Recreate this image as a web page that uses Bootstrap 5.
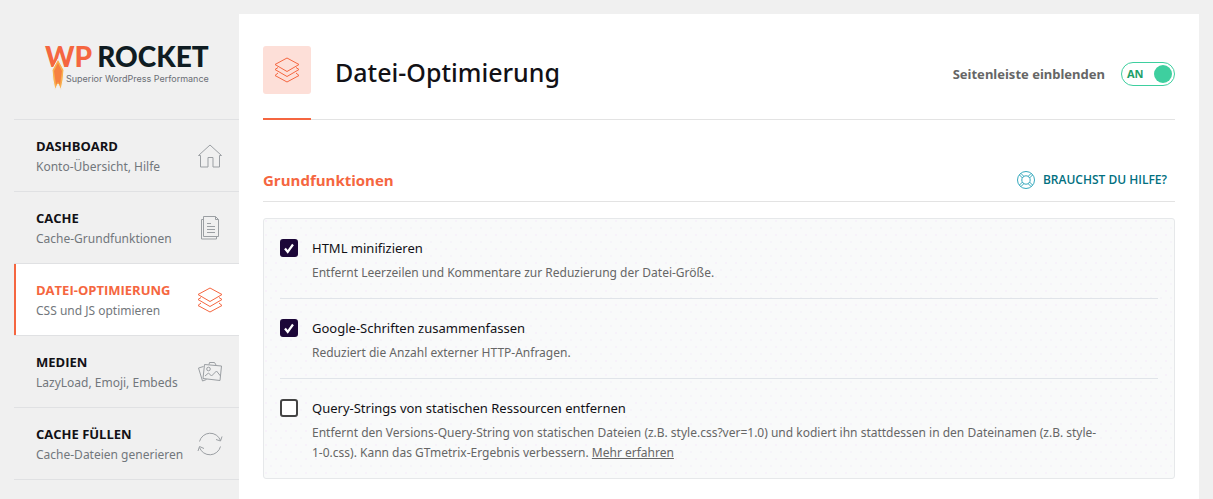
<!DOCTYPE html>
<html lang="de">
<head>
<meta charset="utf-8">
<meta name="viewport" content="width=device-width, initial-scale=1">
<title>WP Rocket – Datei-Optimierung</title>
<link rel="stylesheet" href="https://cdn.jsdelivr.net/npm/bootstrap@5.3.0/dist/css/bootstrap.min.css">
<style>
:root { --orange: #f56640; --ink: #121116; --line: #e0e4e9; }
body { background: #f0f0f0; color: var(--ink); font: 13px/20px "Noto Sans", "Open Sans", sans-serif; }
.shell { padding: 14px 14px 0; }
.side { width: 225px; }
.brand { height: 105px; padding: 26px 0 0 31px; text-decoration: none; color: #0f1c22; font-family: "Lato Black", Lato, sans-serif; }
.brand:hover { color: #0f1c22; }
.brand-name { font-size: 28px; line-height: 32px; font-weight: 900; gap: 5px; }
.brand-name span:first-child { color: var(--orange); }
.brand-tag { margin-top: 1px; font: 9px/12px Inter, sans-serif; color: #6b6e75; padding-left: 21px; white-space: nowrap; }
.flame { left: 37px; top: 45px; }
.side-link { height: 72px; padding: 16px 16px 0 22px; border-top: 1px solid #e0e1e3; color: #72777c; text-decoration: none; }
.side-list li:last-child .side-link { height: 73px; border-bottom: 1px solid #e0e1e3; }
.side-link strong { display: block; color: var(--ink); font-family: "Open Sans", sans-serif; font-weight: 700; }
.side-link span span { font-size: 12px; }
.side-link svg { margin-top: 7px; color: #9b9fa3; }
.side-link.active { background: #fff; box-shadow: inset 2px 0 var(--orange); }
.side-link.active strong, .side-link.active svg { color: var(--orange); }
.page { padding: 32px 24px 20px; }
.page-head { height: 74px; border-bottom: 1px solid #e3e3e3; }
.head-icon { width: 48px; height: 48px; border-radius: 3px; background: #fddfd8; color: var(--orange); }
.head-mark { left: 0; bottom: -1px; width: 48px; height: 2px; background: var(--orange); }
h1 { font-size: 25px; line-height: 36px; font-weight: 500; }
h2 { font-family: "Open Sans", sans-serif; font-size: 15px; line-height: 20px; font-weight: 700; color: var(--orange); }
.toggle-label { font-weight: 700; color: #666; }
.toggle { width: 54px; height: 24px; border: 1px solid #3ecf9f; border-radius: 12px; background: #fff; padding: 0 2px 0 5px; color: #1ea069; font-size: 11px; line-height: 22px; font-weight: 700; }
.toggle i { width: 18px; height: 18px; border-radius: 50%; background: #3ecf9f; }
.section-head { margin-top: 50px; padding: 0 8px 11px 0; border-bottom: 1px solid #e3e3e3; }
.help { color: #02707f; font-family: "Open Sans", sans-serif; font-size: 12px; font-weight: 600; text-decoration: none; }
.options { margin-top: 16px; padding: 0 16px; border: 1px solid #e6e8ea; border-radius: 3px; background: radial-gradient(circle at 2px 2px, #f7f2fa 1px, transparent 1px) 0 0 / 10px 14px, radial-gradient(circle at 7px 9px, #f6f4f9 1px, transparent 1px) 0 0 / 10px 14px, #f9fafa; }
.option { padding: 19px 0 15px; gap: 14px; }
.option + .option { border-top: 1px solid var(--line); }
.option .form-check-input { width: 18px; height: 18px; margin: 1px 0 0; border: 2px solid #444; border-radius: 3px; }
.option .form-check-input:checked { background-color: #1c0738; border-color: #1c0738; background-size: 18px; background-image: url("data:image/svg+xml,%3Csvg xmlns='http://www.w3.org/2000/svg' viewBox='0 0 18 18'%3E%3Cpath d='M5 9.5l2.700 3.500L13 5.500' fill='none' stroke='%23fff' stroke-width='2.2'/%3E%3C/svg%3E"); }
.option label { display: block; }
.option p { margin: 5px 0 0; padding-right: 40px; color: #666; font-size: 12px; }
.option a { color: #666; }
svg { fill: none; stroke: currentColor; flex: none; }
</style>
</head>
<body>
<svg width="0" height="0" class="position-absolute" aria-hidden="true">
  <symbol id="layers" viewBox="0 0 26 26"><path d="M13 1L25 7.500 13 14.500 1 7.500zM4 10.500L1 12.500l12 7 12-7-3-2M4 16l-3 2.500 12 6.500 12-6.500-3-2.500"/></symbol>
</svg>
<div class="shell d-flex min-vh-100">
  <aside class="side flex-shrink-0">
    <a href="#" class="brand d-block position-relative">
      <div class="brand-name d-flex"><span>WP</span> <span>ROCKET</span></div>
      <div class="brand-tag">Superior WordPress Performance</div>
      <svg class="flame position-absolute" width="14" height="32" viewBox="0 0 14 32" aria-hidden="true"><path d="M7 0L1 11l1 10 2 10 3-6 3 6 2-10 1-10z" fill="#f9b04f" stroke="#f0f0f0"/><path d="M7 4L3 12l2 14 2-3 2 3 2-14z" fill="#f68040" stroke="none"/></svg>
    </a>
    <nav>
      <ul class="side-list list-unstyled mb-0">
        <li><a href="#" class="side-link d-flex justify-content-between"><span><strong>DASHBOARD</strong><span>Konto-Übersicht, Hilfe</span></span>
          <svg width="26" height="26" viewBox="0 0 26 26"><path d="M3.500 12.500H1.500L13 2l11.500 10.500h-2V24H16v-9.500h-5V24H3.500z"/></svg></a></li>
        <li><a href="#" class="side-link d-flex justify-content-between"><span><strong>CACHE</strong><span>Cache-Grundfunktionen</span></span>
          <svg width="26" height="26" viewBox="0 0 26 26"><path d="M6.500 1.500h12l3 3v17h-15zM18.500 1.500v3h3M6.500 4.500h-2v19.500h15v-2.500M10 8.500h4M10 11.500h8M10 14.500h8M10 17.500h8"/></svg></a></li>
        <li><a href="#" class="side-link active d-flex justify-content-between" aria-current="page"><span><strong>DATEI-OPTIMIERUNG</strong><span>CSS und JS optimieren</span></span>
          <svg width="26" height="26"><use href="#layers"/></svg></a></li>
        <li><a href="#" class="side-link d-flex justify-content-between"><span><strong>MEDIEN</strong><span>LazyLoad, Emoji, Embeds</span></span>
          <svg width="26" height="26" viewBox="0 0 26 26"><path d="M7.500 5.500L24.500 7 23 21.500 6 19.500zM6.500 7.500L1.500 9l4 13 4-1.500M12 5.500l.500-2 5 0 1.500 2.500M8 17l3.500-3 3 3 5-5 4 5"/><circle cx="11.500" cy="10" r="1.800"/></svg></a></li>
        <li><a href="#" class="side-link d-flex justify-content-between"><span><strong>CACHE FÜLLEN</strong><span>Cache-Dateien generieren</span></span>
          <svg width="26" height="26" viewBox="0 0 26 26"><path d="M2.500 10.500a11 11 0 0 1 21-1M19 8.500l4.500 1.500 1.500-4.500M23.500 15.500a11 11 0 0 1-21 1M7 17.500L2.500 15.500 1 20"/></svg></a></li>
      </ul>
    </nav>
  </aside>
  <main class="page bg-white flex-grow-1">
    <header class="page-head d-flex align-items-start position-relative">
      <span class="head-icon d-flex align-items-center justify-content-center"><svg width="26" height="26"><use href="#layers"/></svg></span>
      <h1 class="ms-4 mb-0 mt-2 me-auto">Datei-Optimierung</h1>
      <div class="d-flex align-items-center mt-3">
        <label class="toggle-label me-3" for="sidebar-toggle">Seitenleiste einblenden</label>
        <button id="sidebar-toggle" type="button" role="switch" aria-checked="true" class="toggle d-flex align-items-center justify-content-between">AN<i></i></button>
      </div>
      <span class="head-mark position-absolute"></span>
    </header>
    <section>
      <div class="section-head d-flex justify-content-between align-items-center">
        <h2 class="mb-0">Grundfunktionen</h2>
        <a href="#" class="help d-flex align-items-center gap-2"><svg width="18" height="18" viewBox="0 0 18 18"><g stroke="#35a9bd"><circle cx="9" cy="9" r="8.500"/><circle cx="9" cy="9" r="4.200"/><path d="M2.500 4l3 3M4 2.500l3 3M15.500 4l-3 3M14 2.500l-3 3M2.500 14l3-3M4 15.500l3-3M15.500 14l-3-3M14 15.500l-3-3"/></g></svg>BRAUCHST DU HILFE?</a>
      </div>
      <div class="options">
        <div class="option d-flex"><input class="form-check-input flex-shrink-0" type="checkbox" id="minify" checked>
          <div><label for="minify">HTML minifizieren</label><p>Entfernt Leerzeilen und Kommentare zur Reduzierung der Datei-Größe.</p></div></div>
        <div class="option d-flex"><input class="form-check-input flex-shrink-0" type="checkbox" id="fonts" checked>
          <div><label for="fonts">Google-Schriften zusammenfassen</label><p>Reduziert die Anzahl externer HTTP-Anfragen.</p></div></div>
        <div class="option d-flex"><input class="form-check-input flex-shrink-0" type="checkbox" id="query">
          <div><label for="query">Query-Strings von statischen Ressourcen entfernen</label><p>Entfernt den Versions-Query-String von statischen Dateien (z.B. style.css?ver=1.0) und kodiert ihn stattdessen in den Dateinamen (z.B. style-<wbr><span class="text-nowrap">1-0.css).</span> Kann das GTmetrix-Ergebnis verbessern. <a href="#">Mehr erfahren</a></p></div></div>
      </div>
    </section>
  </main>
</div>
<script src="https://cdn.jsdelivr.net/npm/bootstrap@5.3.0/dist/js/bootstrap.bundle.min.js"></script>
</body>
</html>
